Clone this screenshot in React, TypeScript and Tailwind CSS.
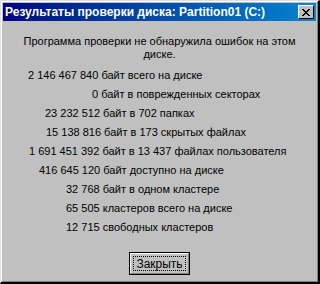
import React from "react";

const lines: { text: string; pl: string }[] = [
  { text: "2 146 467 840 байт всего на диске", pl: "pl-[25px]" },
  { text: "0 байт в поврежденных секторах", pl: "pl-[89px]" },
  { text: "23 232 512 байт в 702 папках", pl: "pl-[42px]" },
  { text: "15 138 816 байт в 173 скрытых файлах", pl: "pl-[43px]" },
  { text: "1 691 451 392 байт в 13 437 файлах пользователя", pl: "pl-[26px]" },
  { text: "416 645 120 байт доступно на диске", pl: "pl-[36px]" },
  { text: "32 768 байт в одном кластере", pl: "pl-[63px]" },
  { text: "65 505 кластеров всего на диске", pl: "pl-[63px]" },
  { text: "12 715 свободных кластеров", pl: "pl-[63px]" },
];

export default function App() {
  return (
    <div
      className="w-[320px] h-[284px] bg-[#c0c0c0] text-black overflow-hidden"
      style={{ fontFamily: '"Liberation Sans", Arial, sans-serif' }}
    >
      <div className="w-full h-full border-t border-l border-t-[#dfdfdf] border-l-[#dfdfdf] border-r-2 border-b-2 border-r-black border-b-black">
        <div className="w-full h-full border-t border-l border-t-white border-l-white border-r border-b border-r-[#808080] border-b-[#808080] flex flex-col p-px">
          <div className="h-[18px] flex items-center justify-between pl-[2px] pr-[2px] bg-gradient-to-r from-[#000080] to-[#1084d0]">
            <span className="text-white font-bold text-[12px] leading-none whitespace-nowrap">
              Результаты проверки диска: Partition01 (C:)
            </span>
            <div className="w-[16px] h-[14px] bg-[#c0c0c0] border-t border-l border-t-white border-l-white border-r border-b border-r-black border-b-black flex items-center justify-center">
              <svg width="8" height="7" viewBox="0 0 8 7" shapeRendering="crispEdges">
                <path
                  fill="#000"
                  d="M0 0h2v1H0zM6 0h2v1H6zM1 1h2v1H1zM5 1h2v1H5zM2 2h4v1H2zM3 3h2v1H3zM2 4h4v1H2zM1 5h2v1H1zM5 5h2v1H5zM0 6h2v1H0zM6 6h2v1H6z"
                />
              </svg>
            </div>
          </div>
          <div className="flex-1 flex flex-col text-[11px]">
            <div className="mt-[14px] text-center leading-[13px] px-[18px]">
              Программа проверки не обнаружила ошибок на этом диске.
            </div>
            <div className="mt-[5px] flex flex-col">
              {lines.map((l) => (
                <div key={l.text} className={`h-[19px] leading-[19px] whitespace-nowrap ${l.pl}`}>
                  {l.text}
                </div>
              ))}
            </div>
            <div className="mt-[15px] flex justify-center">
              <div className="w-[61px] h-[23px] border border-black">
                <div className="w-full h-full border-t border-l border-t-white border-l-white border-r border-b border-r-[#808080] border-b-[#808080] flex items-center justify-center p-[2px]">
                  <div className="w-full h-full border border-dotted border-black flex items-center justify-center leading-none text-[12px]">
                    Закрыть
                  </div>
                </div>
              </div>
            </div>
          </div>
        </div>
      </div>
    </div>
  );
}
